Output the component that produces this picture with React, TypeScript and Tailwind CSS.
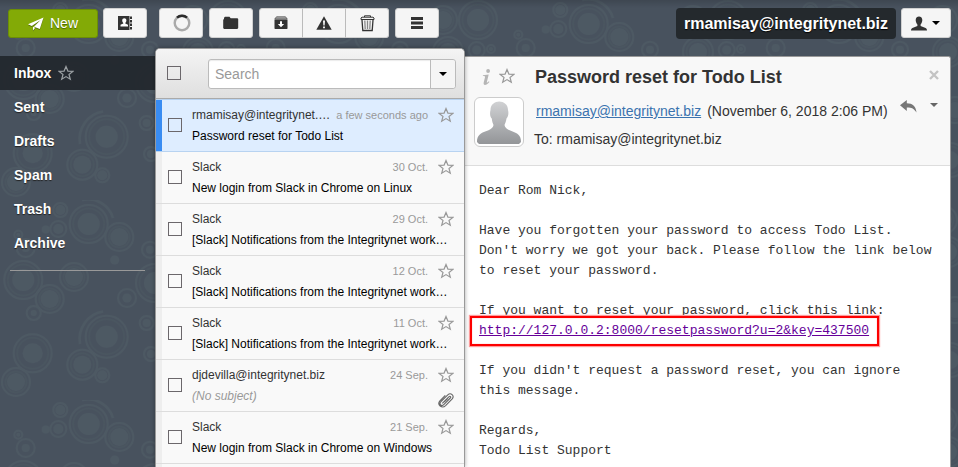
import React from "react";

type Ring = [number, number, number, number];

// x, y, outer ring radius, inner disc radius
const RINGS: Ring[] = [
  [23.3, 80, 20, 11], [74, 77, 15, 9], [49.7, 99, 15, 9], [33.7, 113, 8, 3],
  [106.7, 136.7, 22, 11], [82.3, 164.7, 16, 9], [102.3, 175.3, 8, 5],
  [32.7, 153.3, 20, 10], [16, 182, 15, 9], [127, 98, 10, 4.5], [146.7, 123, 8, 4],
  [151, 154, 8, 4], [155, 83, 20, 11], [60.3, 10, 8, 5], [58.3, 29, 9, 5],
  [45.7, 29.5, 0, 4], [88.7, 24, 20, 11], [119.3, 37, 15, 9], [18.3, 34.7, 5, 2],
  [25.7, 48, 10, 4], [114.7, 60, 0, 4.5], [150, 49.7, 9, 4], [228, 20, 20, 11],
  [193, 20, 15, 9], [226.7, 50, 9, 4.5], [241, 49, 5, 2], [198, 52, 16, 9],
  [205, 110, 14, 8], [200, 160, 18, 9],
];

function Backdrop() {
  return (
    <svg className="absolute inset-0 h-full w-full" aria-hidden="true">
      <defs>
        <pattern id="rings" width="250" height="200" patternUnits="userSpaceOnUse">
          {RINGS.map(([x, y, r, d], i) => (
            <g key={i}>
              {r > 0 && <circle cx={x} cy={y} r={r - 1} fill="none" stroke="#4d5963" strokeWidth="2" />}
              {r > 13 && <circle cx={x} cy={y} r={r - 4.5} fill="none" stroke="#4a5660" strokeWidth="1.5" />}
              <circle cx={x} cy={y} r={d} fill="#4d5963" />
            </g>
          ))}
          <path d="M80 144A28 28 0 0 1 103 111.500" fill="none" stroke="#4d5963" strokeWidth="2.500" />
          <path d="M82 0A26 26 0 0 1 113 18" fill="none" stroke="#4d5963" strokeWidth="2.500" />
        </pattern>
        <linearGradient id="topShade" x1="0" y1="0" x2="0" y2="1">
          <stop offset="0" stopColor="#000" stopOpacity=".14" />
          <stop offset="1" stopColor="#000" stopOpacity="0" />
        </linearGradient>
      </defs>
      <rect width="100%" height="100%" fill="#48525e" />
      <rect width="100%" height="100%" fill="url(#rings)" />
      <rect width="100%" height="8" fill="url(#topShade)" />
    </svg>
  );
}

function Star({ color = "#999" }: { color?: string }) {
  return (
    <svg width="16" height="16" viewBox="0 0 16 16" className="block shrink-0">
      <path d="M8 1.500L9.900 6.100L14.900 6.400L11 9.500L12.300 14.300L8 11.600L3.700 14.300L5 9.500L1.100 6.400L6.100 6.100Z" fill="none" stroke={color} strokeWidth="1.200" />
    </svg>
  );
}

function Caret({ color = "#000" }: { color?: string }) {
  return (
    <svg width="8" height="4" viewBox="0 0 8 4" className="block shrink-0">
      <path d="M0 0H8L4 4Z" fill={color} />
    </svg>
  );
}

function Box() {
  return <span className="block h-3.5 w-3.5 shrink-0 border border-[#6b676b]" />;
}

function Tool({ children, className = "" }: { children: React.ReactNode; className?: string }) {
  return (
    <button className={`flex h-[30px] w-11 shrink-0 items-center justify-center rounded-[3px] border border-[#d0d0d0] bg-[#f5f5f5] ${className}`}>
      {children}
    </button>
  );
}

function Toolbar() {
  return (
    <header className="flex h-[48px] items-start pt-2 pl-2">
      <button className="mt-px flex h-[29px] w-[90px] items-center rounded-[3px] border border-[#6c8e05] bg-[#83aa06] pl-[19px] text-[14px] text-white [text-shadow:0_1px_1px_#476000]">
        <svg width="16" height="14" viewBox="0 0 16 14" className="mr-1.5 drop-shadow-[0_1px_0_#56700a]">
          <path d="M15.500 .5L0 7.200L3.800 8.900L12.600 3L6 9.800L11.800 12Z M5 9.800V13.500L7.200 10.800Z" fill="#fff" />
        </svg>
        New
      </button>
      <Tool className="ml-[5px]">
        <svg width="15" height="14" viewBox="0 0 15 14">
          <path d="M0 0H11.500V14H0Z" fill="#333" />
          <path d="M12 .5H14V3H12Z M12 4H14V6.500H12Z M12 7.500H14V10H12Z M12 11H14V13.500H12Z" fill="#333" />
          <path d="M4.200 4.300C4.200 1.600 8.400 1.600 8.400 4.300C8.400 5.700 7.700 6.500 7.300 7V7.600L10 8.800V10.500H2.500V8.800L5.300 7.600V7C4.800 6.500 4.200 5.700 4.200 4.300Z" fill="#fff" />
        </svg>
      </Tool>
      <Tool className="ml-3">
        <svg width="18" height="18" viewBox="0 0 18 18" className="ml-px">
          <circle cx="9" cy="9" r="7.300" fill="none" stroke="#aaa" strokeWidth="2.400" />
          <path d="M4 3.700A7.300 7.300 0 0 1 14 3.700" fill="none" stroke="#2b2b2b" strokeWidth="2.400" />
        </svg>
      </Tool>
      <Tool className="ml-1.5">
        <svg width="16" height="14" viewBox="0 0 16 14">
          <path d="M1 1.800L2 .8H6.500L7.700 2.200H14.500L15.200 3V12L14.300 13H1L.2 12V3.700L1 3Z" fill="#333" />
        </svg>
      </Tool>
      <div className="ml-1.5 flex">
        <Tool className="rounded-r-none">
          <svg width="14" height="14" viewBox="0 0 14 14">
            <path d="M2.500 .8H11.500L13.200 3H.8Z" fill="#aaa" stroke="#555" strokeWidth=".8" />
            <path d="M.5 3.500H13.500V12.500L13 13H1L.5 12.500Z" fill="#333" />
            <path d="M6 5.200H8V8H10.200L7 11.300L3.800 8H6Z" fill="#fff" />
          </svg>
        </Tool>
        <Tool className="-ml-px rounded-none border-l-[#bbb] border-r-[#bbb]">
          <svg width="16" height="14" viewBox="0 0 16 14">
            <path d="M8 .3L15.700 13.800H.3Z" fill="#333" />
            <path d="M7 4.500H9L8.600 9.500H7.400Z M7.100 10.500H8.900V12.200H7.100Z" fill="#fff" />
          </svg>
        </Tool>
        <Tool className="w-[43px]! rounded-l-none border-l-0">
          <svg width="15" height="17" viewBox="0 0 15 17">
            <path d="M4.500 2V.8H10.500V2M1 4.500V3L2 2.200H13L14 3V4.500Z" fill="none" stroke="#333" />
            <path d="M2 5L2.800 15.500H12.200L13 5" fill="none" stroke="#333" strokeWidth="1.300" />
            <path d="M4.800 5.500L5.200 14M7.500 5.500V14M10.200 5.500L9.800 14" fill="none" stroke="#888" strokeWidth="1.300" />
          </svg>
        </Tool>
      </div>
      <Tool className="ml-1.5">
        <svg width="12" height="12" viewBox="0 0 12 12">
          <path d="M0 0H12V3H0Z M0 4.500H12V7.500H0Z M0 9H12V12H0Z" fill="#333" />
        </svg>
      </Tool>
      <div className="mr-[5px] ml-auto flex h-[31px] w-[220px] items-center justify-center rounded-[4px] bg-[#24292d] text-[16px] font-bold whitespace-nowrap text-white [text-shadow:0_1px_1px_#000]">
        rmamisay@integritynet.biz
      </div>
      <Tool className="mr-[7px] w-[50px]! gap-[5px]">
        <svg width="16" height="15" viewBox="0 0 16 15" className="-ml-0.5">
          <path d="M4.700 4.300C4.300-.8 11.700-.8 11.300 4.300C11.200 6.300 10.400 7.600 9.600 8.500V10L14.600 12C15.600 12.500 16 13.400 16 14.500H0C0 13.400 .4 12.500 1.400 12L6.400 10V8.500C5.600 7.600 4.800 6.300 4.700 4.300Z" fill="#333" />
        </svg>
        <Caret />
      </Tool>
    </header>
  );
}

function Sidebar() {
  return (
    <nav className="w-[155px] shrink-0 pt-2 text-[14px] font-bold text-white [text-shadow:0_1px_1px_#222]">
      <div className="flex h-[34px] items-center bg-[#23282d]/95 pl-3.5">
        Inbox
        <span className="ml-[7px]"><Star color="#9ba0a3" /></span>
      </div>
      {["Sent", "Drafts", "Spam", "Trash", "Archive"].map((name) => (
        <div key={name} className="flex h-[34px] items-center pl-3.5">{name}</div>
      ))}
      <div className="mt-[10px] mr-2.5 ml-2.5 h-px bg-[#999]" />
    </nav>
  );
}

type Mail = { from: string; date: string; subject: string; active?: boolean; empty?: boolean };

const MAILS: Mail[] = [
  { from: "rmamisay@integritynet.…", date: "a few seconds ago", subject: "Password reset for Todo List", active: true },
  { from: "Slack", date: "30 Oct.", subject: "New login from Slack in Chrome on Linux" },
  { from: "Slack", date: "29 Oct.", subject: "[Slack] Notifications from the Integritynet work…" },
  { from: "Slack", date: "12 Oct.", subject: "[Slack] Notifications from the Integritynet work…" },
  { from: "Slack", date: "11 Oct.", subject: "[Slack] Notifications from the Integritynet work…" },
  { from: "djdevilla@integritynet.biz", date: "24 Sep.", subject: "(No subject)", empty: true },
  { from: "Slack", date: "21 Sep.", subject: "New login from Slack in Chrome on Windows" },
];

function Row({ mail, afterActive }: { mail: Mail; afterActive: boolean }) {
  return (
    <div className={`flex h-[52px] border-t ${mail.active || afterActive ? "border-[#b8d3f1]" : "border-[#ddd]"} ${mail.active ? "bg-[#deedff]" : "bg-[#f9f9f9]"}`}>
      <div className={`w-1.5 shrink-0 ${mail.active ? "bg-[#398cf2]" : "bg-[#eee]"}`} />
      <div className="pt-[18px] pl-1.5"><Box /></div>
      <div className="ml-2.5 w-[257px] pt-[7px] text-[12px] whitespace-nowrap">
        <div className="flex h-4 w-[236px] items-center justify-between leading-4">
          <span className="text-[#333]">{mail.from}</span>
          <span className="text-[11px] text-[#999]">{mail.date}</span>
        </div>
        <div className={`mt-[5px] h-4 leading-4 ${mail.empty ? "text-[#999] italic" : "text-black"}`}>{mail.subject}</div>
      </div>
      <div className="-ml-[11px] w-4 shrink-0 pt-[7px]">
        <Star />
        {mail.empty && (
          <svg width="16" height="16" viewBox="0 0 16 16" className="mt-[9px]">
            <path d="M4.300 11.300L10.800 4.800C12.200 3.500 13.300 5 12.300 6L6 12.400C3.500 15 .5 12.300 3 9.500L9.800 2.800C12.800 .2 16.800 3.700 14.200 6.800L7.600 13.600C3.900 17-1.300 12.800 1.900 8.800L7.300 3.400M6.300 9.800L9.800 6.300" fill="none" stroke="#666" strokeWidth="1.100" />
          </svg>
        )}
      </div>
    </div>
  );
}

function MailList() {
  return (
    <section className="z-10 w-[310px] shrink-0 overflow-hidden rounded-t-[5px] border border-b-0 border-[#999] bg-[#f9f9f9] shadow-[0_0_4px_rgba(0,0,0,.35)]">
      <div className="flex h-[50px] items-center border-b border-[#aaa] bg-linear-to-b from-[#f4f4f4] to-[#dfdfdf] pl-[11px]">
        <span className="-mt-0.5"><Box /></span>
        <div className="ml-[27px] flex h-[30px] w-[248px] rounded-[3px] border border-[#bbb] bg-white text-[14px] text-[#999] shadow-[inset_0_1px_1px_rgba(0,0,0,.08)]">
          <span className="flex-1 pl-1.5 leading-7">Search</span>
          <button className="flex w-[25px] items-center justify-center rounded-r-[3px] border-l border-[#bbb] bg-[#f5f5f5]"><Caret /></button>
        </div>
      </div>
      {MAILS.map((mail, i) => <Row key={i} mail={mail} afterActive={i === 1} />)}
      <div className="h-1 border-t border-[#ddd] bg-linear-to-r from-[#eee] from-[6px] to-[#f9f9f9] to-[6px]" />
    </section>
  );
}

function Avatar() {
  return (
    <div className="h-[50px] w-[50px] shrink-0 rounded-[6px] border border-[#ccc] bg-white p-0.5">
      <svg width="44" height="44" viewBox="0 0 44 44">
        <defs>
          <linearGradient id="bust" x1="0" y1="0" x2="0" y2="1">
            <stop offset="0" stopColor="#d1d2d4" />
            <stop offset="1" stopColor="#939598" />
          </linearGradient>
        </defs>
        <path d="M13.500 10C13.500-1.500 31-1.500 31 10C32 14 31 17 29.500 18.500C29 22 28 23.500 27.500 25C28 30 36 31 40 33.500C43.500 36 44 39 44 42L42 44H2L0 42C0 39 .5 36 4 33.500C8 31 16 30 16.500 25C16 23.500 15 22 14.800 18.500C13.300 17 12.500 14 13.500 10Z" fill="url(#bust)" />
      </svg>
    </div>
  );
}

function MessageHeader() {
  return (
    <div className="h-[109px] border-b border-[#ddd] bg-[#f8f8f8]">
      <div className="flex h-[40px] items-center">
        <svg width="9" height="17" viewBox="0 0 9 17" className="ml-[17px]">
          <circle cx="6.100" cy="2" r="1.900" fill="#b5b5b5" />
          <path d="M1 6.200L6.700 5.600L4.800 13.200C4.700 14 5.200 13.800 7 12.300L7.400 12.900C4.500 16.500 1 17 1.700 13.500L3 8.300C3.200 7.300 2.800 7.100 .8 7Z" fill="#b5b5b5" />
        </svg>
        <span className="-mt-0.5 ml-2"><Star /></span>
        <h1 className="ml-5 text-[18px] font-bold text-[#333]">Password reset for Todo List</h1>
        <svg width="10" height="10" viewBox="0 0 10 10" className="-mt-1 mr-[11px] ml-auto">
          <path d="M1 1L9 9M9 1L1 9" stroke="#c3c3c3" strokeWidth="2.400" />
        </svg>
      </div>
      <div className="flex pl-[9px]">
        <Avatar />
        <div className="ml-[10px] text-[14px] leading-[28px] whitespace-nowrap text-[#333]">
          <div className="ml-0.5"><a className="text-[#3b73af] underline">rmamisay@integritynet.biz</a><span className="ml-1.5">(November 6, 2018 2:06 PM)</span></div>
          <div>To: rmamisay@integritynet.biz</div>
        </div>
        <svg width="17" height="14" viewBox="0 0 17 14" className="mt-[3px] ml-3">
          <path d="M0 5.300L6.800 0V3.300C12.500 3.300 15.800 6 16.500 12.500C14 8.800 11.500 7.500 6.800 7.600V11Z" fill="#777" />
        </svg>
        <span className="mt-1.5 ml-[13px]"><Caret color="#666" /></span>
      </div>
    </div>
  );
}

function Message() {
  return (
    <main className="mt-2 w-[486px] shrink-0 overflow-hidden rounded-tr-[3px] border-t border-r border-[#999] bg-white">
      <MessageHeader />
      <div className="pt-[15px] pl-3.5 font-['Liberation_Mono',monospace] text-[13px] leading-5 whitespace-pre text-[#333]">
        <p>Dear Rom Nick,</p>
        <p className="mt-5">{"Have you forgotten your password to access Todo List.\nDon't worry we got your back. Please follow the link below\nto reset your password."}</p>
        <p className="mt-5">If you want to reset your password, click this link:</p>
        <p className="relative">
          <a className="text-[#609] underline">http://127.0.0.2:8000/resetpassword?u=2&amp;key=437500</a>
          <span className="absolute -top-[5px] -left-[9px] h-[30px] w-[409px] border-2 border-[#fd0000] shadow-[0_0_1px_1px_#ff9c9c,inset_0_0_1px_#f66]" />
        </p>
        <p className="mt-5">{"If you didn't request a password reset, you can ignore\nthis message."}</p>
        <p className="mt-5">{"Regards,\nTodo List Support"}</p>
      </div>
    </main>
  );
}

export default function App() {
  return (
    <div className="relative h-[467px] w-[958px] overflow-hidden font-['Liberation_Sans',Arial,sans-serif]">
      <Backdrop />
      <div className="relative flex h-full flex-col">
        <Toolbar />
        <div className="flex min-h-0 flex-1">
          <Sidebar />
          <MailList />
          <Message />
        </div>
      </div>
    </div>
  );
}
